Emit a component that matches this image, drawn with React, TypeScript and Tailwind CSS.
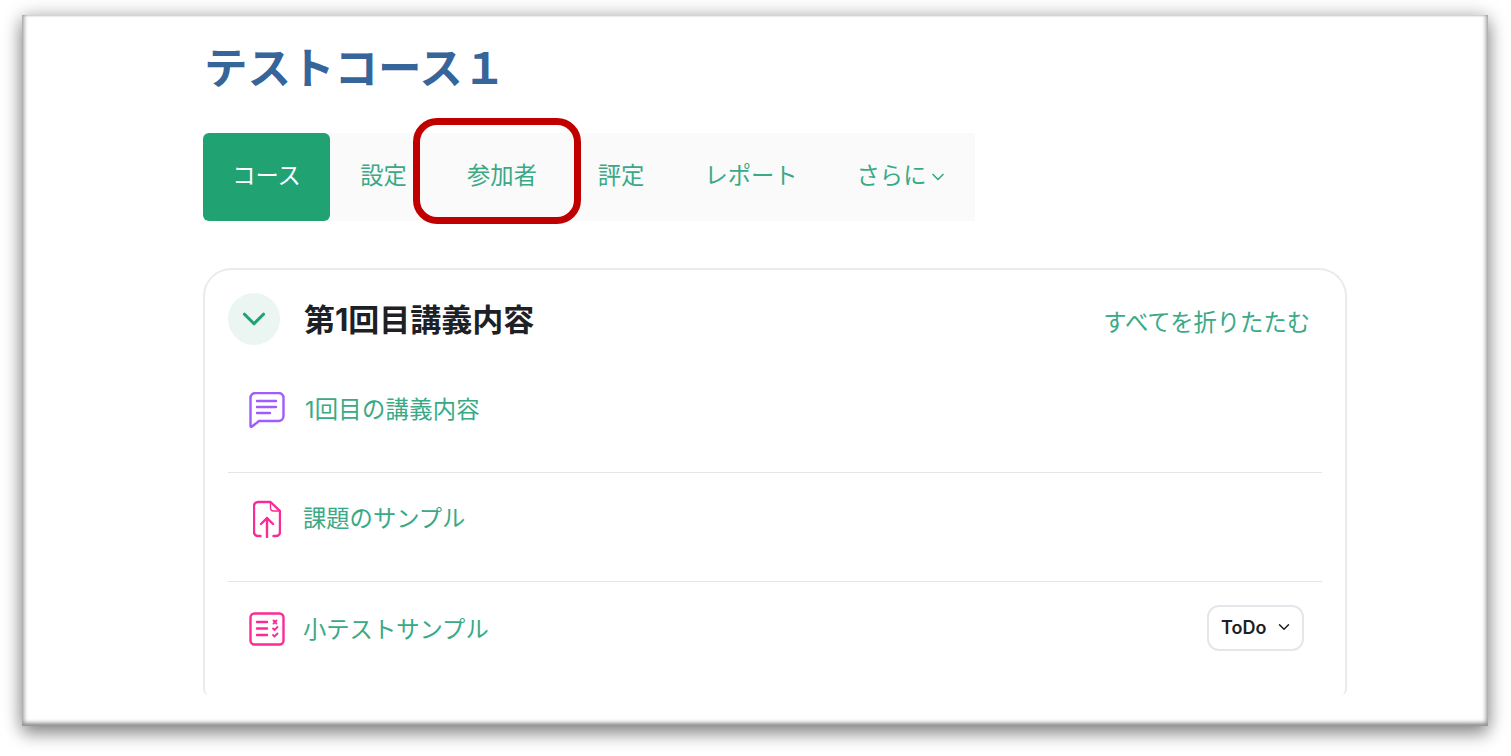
import React from 'react';
import { ChevronDown } from 'lucide-react';

const ChatIcon = () => (
  <svg width="36" height="36" viewBox="0 0 36 36" fill="none" stroke="#a05cff" strokeWidth="2.4" strokeLinecap="round" strokeLinejoin="round">
    <path d="M1.5 6a5 5 0 0 1 5-5h23a5 5 0 0 1 5 5v18a5 5 0 0 1-5 5H10l-7 5.5q-1.5 1-1.5-.5Z" />
    <path d="M8 9h19M8 15h19M8 21h13" />
  </svg>
);

const UploadIcon = () => (
  <svg width="28" height="38" viewBox="0 0 28 38" fill="none" stroke="#fb2b96" strokeWidth="2.4" strokeLinecap="round" strokeLinejoin="round">
    <path d="M7.5 36H5a4 4 0 0 1-4-4V6a4 4 0 0 1 4-4h12.5L27 11v21a4 4 0 0 1-4 4h-2.5" />
    <path d="M17.5 2v6a3 3 0 0 0 3 3H27" strokeWidth="1.4" />
    <path d="M14 37V18M8 24l6-6 6 6" />
  </svg>
);

const QuizIcon = () => (
  <svg width="36" height="34" viewBox="0 0 36 34" fill="none" stroke="#fb2b96" strokeWidth="2.4" strokeLinecap="round" strokeLinejoin="round">
    <rect x="1.5" y="1.5" width="33" height="31" rx="4" />
    <path d="M8 10h10M8 16.5h10M8 23h10" />
    <path d="M24.5 8.5l3 3M27.5 8.5l-3 3M24 16.5l1.5 1.5 3-3M24 23l1.5 1.5 3-3" strokeWidth="1.8" />
  </svg>
);

const tabClass = 'flex shrink-0 items-center justify-center whitespace-nowrap pb-[2px] text-[23.3px] text-[#3aa986]';

const App: React.FC = () => {
  return (
    <div className="h-[756px] overflow-hidden bg-white pl-[22px] pt-[15px] font-['Inter','Noto_Sans_CJK_JP',sans-serif]">
      <div className="h-[711px] w-[1466px] bg-white pl-[181px] pr-[141px] shadow-[0_8px_16px_rgba(0,0,0,0.38),0_0_18px_rgba(0,0,0,0.22),inset_4px_0_4px_-2px_#999,inset_-4px_0_4px_-2px_#999,inset_0_-6px_4px_-3px_#888,inset_0_2px_2px_-1px_#ddd]">
        <h1 className="flex h-[106px] items-center whitespace-nowrap pl-[1px] pt-[2px] text-[43.5px] font-bold text-[#36659a]">テストコース１</h1>

        <nav className="relative mt-[12px] flex h-[88px] w-[772px] bg-[#fafafa]">
          <a className="flex w-[127px] shrink-0 items-center justify-center whitespace-nowrap rounded-md bg-[#20a272] pb-[2px] text-[23.3px] text-white">コース</a>
          <a className={`${tabClass} w-[107px]`}>設定</a>
          <a className={`${tabClass} w-[130px]`}>参加者</a>
          <a className={`${tabClass} w-[108px]`}>評定</a>
          <a className={`${tabClass} w-[152px]`}>レポート</a>
          <a className={`${tabClass} w-[148px] pl-[3px]`}>
            さらに
            <ChevronDown size={20} strokeWidth={2} className="ml-[2px] mt-[2px] shrink-0" />
          </a>
          <div className="absolute left-[210px] top-[-15px] h-[106px] w-[168px] rounded-[24px] border-[7px] border-[#c00000]" />
        </nav>

        <div className="mt-[47px] h-[427px] overflow-hidden rounded-t-[28px] rounded-b-[6px] border-x-2 border-t-2 border-[#e8ebef] pl-[23px] pr-[23px] pt-[23px]">
          <div className="flex h-[52px] items-center">
            <div className="flex h-[52px] w-[52px] shrink-0 items-center justify-center rounded-full bg-[#ebf5f2]">
              <ChevronDown size={38} strokeWidth={2} className="text-[#20a272]" />
            </div>
            <h2 className="ml-[24px] whitespace-nowrap pt-[2px] text-[31px] font-bold text-[#1d2125]">第1回目講義内容</h2>
            <a className="ml-auto mr-[12px] mt-[8px] whitespace-nowrap text-[23.3px] text-[#3aa986]">すべてを折りたたむ</a>
          </div>

          <div className="mt-[20px] flex h-[108px] items-start border-b border-[#e3e5e8]">
            <div className="flex h-[90px] items-center">
              <div className="ml-[21px] flex w-[36px] justify-center"><ChatIcon /></div>
              <span className="ml-[20px] text-[23.3px] tracking-[0.3px] text-[#3aa986]">1回目の講義内容</span>
            </div>
          </div>

          <div className="flex h-[109px] items-start border-b border-[#e3e5e8]">
            <div className="flex h-[91px] items-center">
              <div className="ml-[25px] flex w-[28px] justify-center"><UploadIcon /></div>
              <span className="ml-[22px] mt-[2px] text-[23.3px] text-[#3aa986]">課題のサンプル</span>
            </div>
          </div>

          <div className="flex h-[94px] items-center">
            <div className="ml-[21px] flex w-[36px] justify-center"><QuizIcon /></div>
            <span className="ml-[18px] mt-[2px] text-[23.3px] text-[#3aa986]">小テストサンプル</span>
            <button className="ml-auto mb-[2px] mr-[18px] flex h-[46px] w-[97px] items-center rounded-xl border-2 border-[#e3e6ea] pb-[2px] pl-[12px] text-[18px] font-semibold text-[#1d2125]">
              ToDo
              <ChevronDown size={18} strokeWidth={2} className="ml-[9px]" />
            </button>
          </div>
        </div>
      </div>
    </div>
  );
};

export default App;
